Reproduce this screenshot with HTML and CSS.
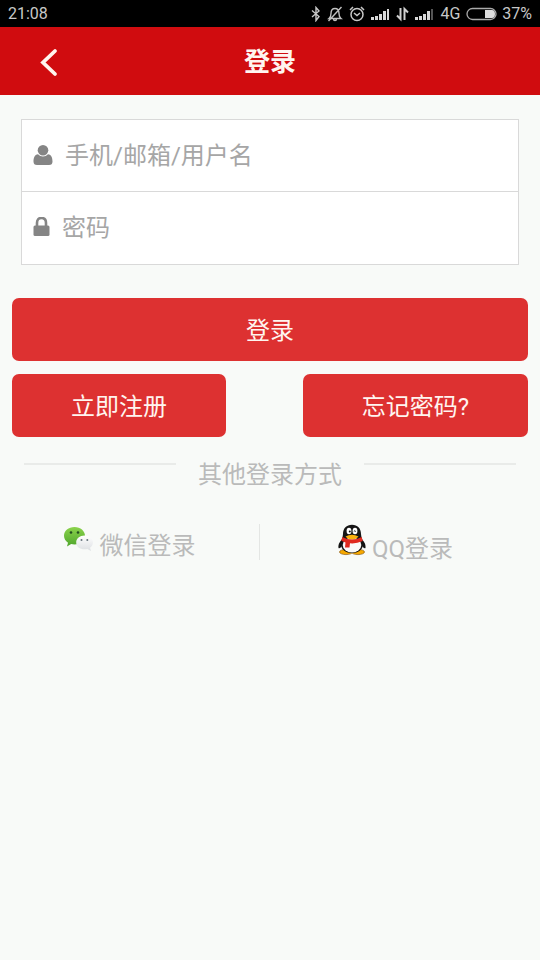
FILE: index.html
```html
<!DOCTYPE html>
<html lang="zh-CN">
<head>
<meta charset="utf-8">
<meta name="viewport" content="width=device-width, initial-scale=1">
<title>登录</title>
<link rel="stylesheet" href="styles.css">
</head>
<body>
<div class="status">
  <span class="status-time">21:08</span>
  <div class="status-icons">
    <svg width="10" height="16" viewBox="0 0 10 16" fill="none" stroke="#c8c8c8" stroke-width="1.4"><path d="M1 4.500l7 6L5 14.500v-13l3 3.500-7 6"/></svg>
    <svg width="16" height="16" viewBox="0 0 16 16" fill="none" stroke="#c0c0c0" stroke-width="1.4"><path d="M2 12.500h12c-2-1.500-2-3-2-5C12 4 10.500 2.500 8 2.500S4 4 4 7.500c0 2 0 3.500-2 5zM6.500 13c0 2 3 2 3 0M14.500 1L1.500 15"/></svg>
    <svg width="16" height="16" viewBox="0 0 16 16" fill="none" stroke="#c8c8c8" stroke-width="1.5"><circle cx="8" cy="8.500" r="6"/><path d="M5 7l3 2.500L11 7M1 4l3-3M12 1l3 3"/></svg>
    <svg width="19" height="16" viewBox="0 0 19 16" fill="#d8d8d8"><path d="M0 11h3v3H0zM4 10h3v4H4zM8 8h3v6H8zM12 5h3v9h-3zM16 3h2v11h-2z"/></svg>
    <svg width="13" height="16" viewBox="0 0 13 16" fill="none" stroke="#d0d0d0" stroke-width="2"><path d="M4.500 2v11L1 9.500M8.500 14V3L12 6.500"/></svg>
    <svg width="19" height="16" viewBox="0 0 19 16" fill="#d8d8d8"><path d="M0 11h3v3H0zM4 10h3v4H4zM8 8h3v6H8zM12 5h3v9h-3z"/><path fill="#555" d="M16 3h2v11h-2z"/></svg>
    <span>4G</span>
    <svg class="battery" width="32" height="14" viewBox="0 0 32 14"><rect x="1" y="1.500" width="29" height="11" rx="5.500" fill="none" stroke="#aaa" stroke-width="1.300"/><path d="M19 3h7q3 0 3 4t-3 4h-7z" fill="#ddd"/></svg>
    <span>37%</span>
  </div>
</div>
<header class="header">
  <a class="back" href="#" aria-label="返回"><svg width="18" height="30" viewBox="0 0 18 30" fill="none" stroke="#fff5ee" stroke-width="3.800" stroke-linecap="round"><path d="M15 4L3 15.500L15 27"/></svg></a>
  <h1 class="title">登录</h1>
</header>
<main>
  <form>
    <div class="fields">
      <label class="field">
        <svg width="20" height="22" viewBox="0 0 20 22" fill="#858585"><circle cx="10" cy="5.300" r="5.300"/><path d="M5 9.300C1.500 9.800.5 13 .5 16.500Q.5 20 4 20h12q3.500 0 3.500-3.500c0-3.500-1-6.700-4.500-7.200q-2 2.200-5 2.200t-5-2.200z"/></svg>
        <input type="text" placeholder="手机/邮箱/用户名" aria-label="手机/邮箱/用户名">
      </label>
      <label class="field">
        <svg width="17" height="22" viewBox="0 0 17 22"><path d="M4 9V6q0-5 4.500-5T13 6v3" fill="none" stroke="#858585" stroke-width="2.600"/><rect x=".5" y="8.500" width="16" height="10.500" rx="1.500" fill="#858585"/></svg>
        <input type="password" placeholder="密码" aria-label="密码">
      </label>
    </div>
    <div class="actions">
      <button class="btn btn-wide" type="submit">登录</button>
      <button class="btn" type="button">立即注册</button>
      <button class="btn" type="button">忘记密码?</button>
    </div>
  </form>
  <div class="divider"><span class="line"></span><span class="divider-text">其他登录方式</span><span class="line"></span></div>
  <div class="social">
    <a class="wechat" href="#">
      <svg width="30" height="28" viewBox="0 0 30 28">
        <defs><linearGradient id="g" x1="0" y1="0" x2="0" y2="1"><stop offset="0" stop-color="#8bd34c"/><stop offset="1" stop-color="#4fa52c"/></linearGradient><linearGradient id="w" x1="0" y1="0" x2="0" y2="1"><stop offset="0" stop-color="#fff"/><stop offset="1" stop-color="#dcdfe2"/></linearGradient></defs>
        <path d="M10.500 1C4.500 1 0 4.800 0 9.800c0 3 1.500 5.200 4 6.900L3 20.500l4.200-2.400c1 .3 2.100.4 3.300.4 6 0 10.500-3.900 10.500-8.700S16.500 1 10.500 1z" fill="url(#g)"/>
        <path d="M20.500 9.500c-4.700 0-8.300 3-8.300 6.900s3.600 6.900 8.300 6.900c1 0 1.900-.1 2.800-.4l3.700 2.100-1-3.200c1.800-1.400 2.900-3.200 2.900-5.400 0-3.900-3.700-6.900-8.400-6.900z" fill="url(#w)"/>
        <g fill="#234d20"><circle cx="7" cy="6.500" r="1.300"/><circle cx="14" cy="6.500" r="1.300"/></g><g fill="#66737c"><circle cx="17.500" cy="14" r="1"/><circle cx="23.300" cy="14" r="1"/></g>
      </svg>
      <span>微信登录</span>
    </a>
    <a class="qq" href="#">
      <svg width="28" height="32" viewBox="0 0 28 32">
        <ellipse cx="8" cy="28" rx="6.500" ry="2.600" fill="#f6a800" stroke="#7c4a00" stroke-width=".6"/><ellipse cx="20" cy="28" rx="6.500" ry="2.600" fill="#f6a800" stroke="#7c4a00" stroke-width=".6"/>
        <path d="M5.500 14C2 17 0 20 .5 24c1 1 3-1 4-3h19c1 2 3 4 4 3 .5-4-1.500-7-5-10z" fill="#111"/>
        <path d="M14 .8C8.500.8 5 4.500 5 10c0 3-2 6-2 10 0 6 5 9 11 9s11-3 11-9c0-4-2-7-2-10C23 4.500 19.500.8 14 .8z" fill="#151515"/>
        <ellipse cx="14" cy="21" rx="9.300" ry="7.500" fill="#fafafa"/>
        <ellipse cx="11" cy="7" rx="2.400" ry="3.200" fill="#fff"/><ellipse cx="17" cy="7" rx="2.400" ry="3.200" fill="#fff"/><circle cx="11.800" cy="7.500" r="1" fill="#111"/><path d="M15.800 7.500q1-1.500 2 0" fill="none" stroke="#111"/>
        <path d="M7.500 12.500Q14 9 20.500 12.500 18 15.500 14 15.500t-6.500-3z" fill="#fbb20d"/>
        <path d="M4.300 13Q14 18 23.700 13l1.100 4Q18 20 12 19.300L11.500 23.500H7l.5-5-4.200-1.700z" fill="#e02a20"/>
      </svg>
      <span>QQ登录</span>
    </a>
  </div>
</main>
</body>
</html>
```
FILE: styles.css
```css
* { box-sizing: border-box; }
body {
  margin: 0;
  min-height: 100vh;
  background: #f8faf8;
  font-family: Roboto, "Noto Sans CJK SC", sans-serif;
  font-size: 24px;
  line-height: 36px;
}
a { color: inherit; text-decoration: none; }
svg { display: block; flex: none; }
.status {
  display: flex;
  justify-content: space-between;
  align-items: center;
  height: 27px;
  padding: 0 8px;
  background: #000;
  color: #c8c8c8;
  font-size: 16px;
  line-height: 28px;
}
.status-icons { display: flex; align-items: center; gap: 6px; }
.battery { margin-right: -2px; }
.header {
  display: grid;
  grid-template-columns: 1fr auto 1fr;
  align-items: center;
  height: 68px;
  padding: 2px 40px 0;
  background: #d00c0f;
  color: #fff5f0;
}
.title { margin: 0; font-size: 26px; line-height: 36px; font-weight: 700; }
.back { justify-self: start; }
.fields {
  margin: 24px 21px 0;
  border: 1px solid #d9d9d9;
  background: #fff;
}
.field {
  display: flex;
  align-items: center;
  gap: 12px;
  height: 72px;
  padding: 0 11px;
}
.field:first-child { height: 71px; }
.field + .field { height: 73px; border-top: 1px solid #d9d9d9; }
.field input {
  flex: 1;
  min-width: 0;
  height: 48px;
  padding: 0;
  border: 0;
  outline: 0;
  background: none;
  color: #555;
  font: inherit;
}
.field input::placeholder { color: #a6a6a6; opacity: 1; }
.actions {
  display: flex;
  flex-wrap: wrap;
  justify-content: space-between;
  gap: 13px;
  margin: 33px 12px 0;
}
.btn {
  height: 63px;
  padding: 2px 59px 0;
  border: 0;
  border-radius: 7px;
  background: #dd3131;
  color: #fff5f0;
  font: inherit;
}
.btn-wide { width: 100%; }
.divider {
  display: flex;
  gap: 22px;
  margin: 19px 24px 0;
  color: #bababa;
}
.divider-text { padding-top: 1px; }
.line { flex: 1; height: 2px; margin-top: 7px; background: #e9ebe9; }
.social {
  display: grid;
  grid-template-columns: 13fr 14fr;
  margin-top: 31px;
  color: #bababa;
}
.social a {
  display: flex;
  justify-content: center;
  gap: 6px;
  height: 36px;
}
.wechat { border-right: 1px solid #e4e6e4; }
.wechat span { padding-top: 4px; }
.wechat svg { margin-top: 2px; }
.qq { padding-right: 9px; }
.qq span { padding-top: 7px; }
```
